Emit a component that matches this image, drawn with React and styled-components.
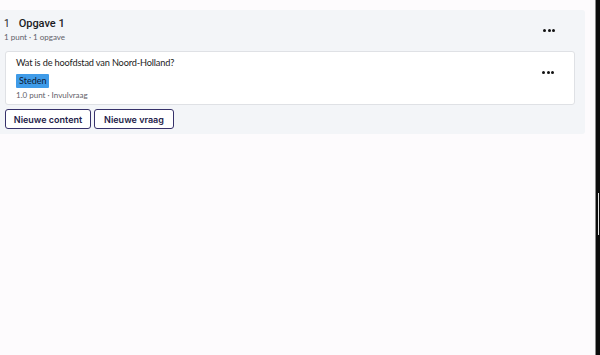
import styled, { createGlobalStyle } from 'styled-components'

const Global = createGlobalStyle`
	html, body {
		margin: 0;
		padding: 0;
		background: #fdfbfd;
		font-family: Lato, 'Liberation Sans', sans-serif;
		color: #1f1f28;
		overflow: hidden;
	}
`

const Page = styled.div`
	display: flex;
	width: 600px;
	height: 355px;
`

const Main = styled.div`
	flex: 1;
	min-width: 0;
	padding: 10px 10px 0 0;
`

const Handle = styled.div`
	flex: 0 0 5px;
	box-sizing: border-box;
	background-color: #0d0d0d;
	border-left: 1px solid #8a8a8a;
	padding-top: 193px;
	display: flex;
	justify-content: center;
`

const Grip = styled.div`
	width: 1px;
	height: 42px;
	background: #e6e6e6;
`

const Panel = styled.section`
	background: #f3f5f8;
	border-radius: 0 3px 3px 0;
	padding: 7px 10px 5px 4px;
`

const Head = styled.div`
	display: flex;
	align-items: flex-start;
	justify-content: space-between;
	padding-right: 20px;
`

const Title = styled.div`
	display: flex;
	align-items: baseline;
	gap: 9px;
`

const Num = styled.span`
	font-family: Roboto, sans-serif;
	font-size: 10px;
	color: #222;
`

const Name = styled.span`
	font-family: Roboto, sans-serif;
	font-weight: 500;
	font-size: 11px;
	color: #1b1b1f;
`

const Meta = styled.div`
	font-size: 8px;
	color: #5f6068;
	margin-top: 2px;
`

const Dots = styled.button`
	border: 0;
	background: none;
	padding: 0;
	margin-top: ${(p) => p.top || 0}px;
	display: flex;
	gap: 1.5px;
	cursor: pointer;

	span {
		width: 3px;
		height: 3px;
		border-radius: 50%;
		background: #111;
	}
`

const Card = styled.div`
	margin: 9px 0 0 1px;
	background: #fff;
	border: 1px solid #dfe1e5;
	border-radius: 3px;
	padding: 5px 20px 4px 10px;
	display: flex;
	justify-content: space-between;
	align-items: flex-start;
`

const Question = styled.div`
	font-size: 9.2px;
	letter-spacing: -0.15px;
	color: #1c1c22;
`

const Tag = styled.span`
	display: inline-block;
	margin-top: 1px;
	background: #3f9be8;
	color: #0e1a33;
	font-size: 9px;
	line-height: 10px;
	padding: 2px 3px;
	border-radius: 1px;
`

const Actions = styled.div`
	display: flex;
	gap: 3px;
	margin: 4px 0 0 1px;
`

const Button = styled.button`
	font-family: Inter, Lato, sans-serif;
	font-weight: 600;
	font-size: 9px;
	color: #24224a;
	background: #fff;
	border: 1.5px solid #36316a;
	border-radius: 3px;
	height: 20px;
	width: ${(p) => p.w}px;
	padding: 0;
	cursor: pointer;
`

function More({ top }) {
	return (
		<Dots top={top} aria-label="Meer">
			<span />
			<span />
			<span />
		</Dots>
	)
}

export default function App() {
	return (
		<Page>
			<Global />
			<Main>
				<Panel>
					<Head>
						<div>
							<Title>
								<Num>1</Num>
								<Name>Opgave 1</Name>
							</Title>
							<Meta>1 punt · 1 opgave</Meta>
						</div>
						<More top={12} />
					</Head>
					<Card>
						<div>
							<Question>Wat is de hoofdstad van Noord-Holland?</Question>
							<Tag>Steden</Tag>
							<Meta>1.0 punt · Invulvraag</Meta>
						</div>
						<More top={14} />
					</Card>
					<Actions>
						<Button w={86}>Nieuwe content</Button>
						<Button w={80}>Nieuwe vraag</Button>
					</Actions>
				</Panel>
			</Main>
			<Handle>
				<Grip />
			</Handle>
		</Page>
	)
}
